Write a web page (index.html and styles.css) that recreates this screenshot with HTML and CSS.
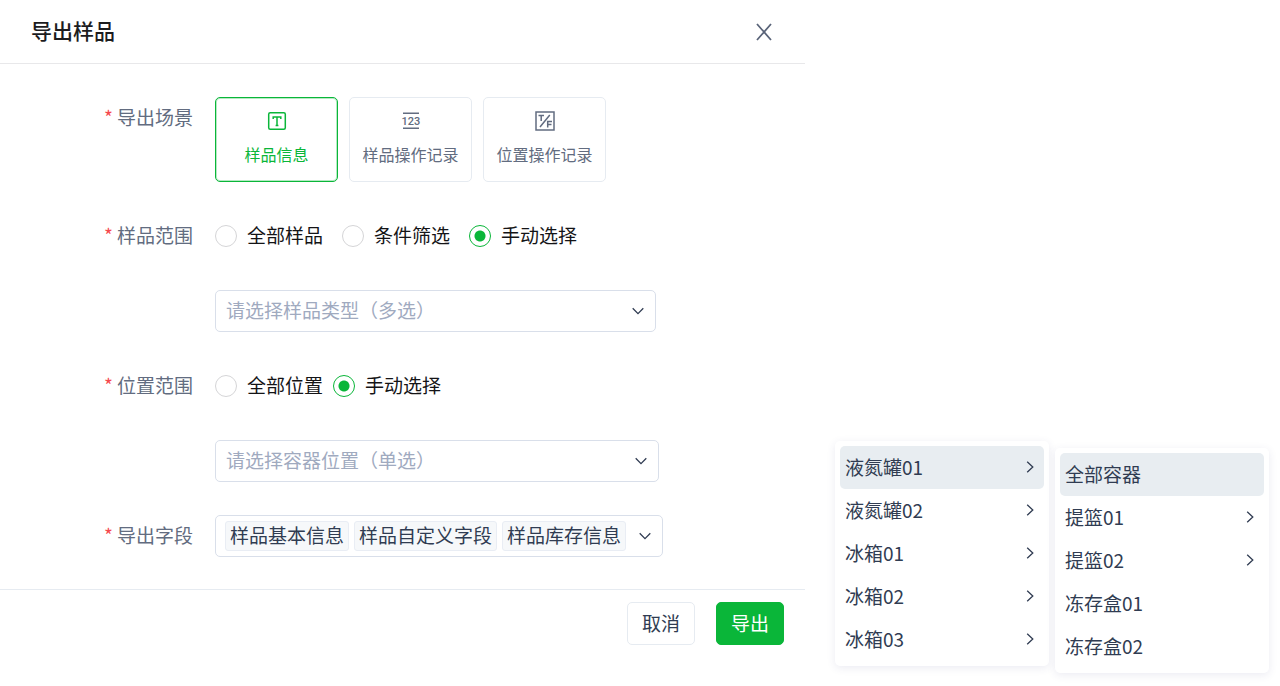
FILE: index.html
```html
<!DOCTYPE html>
<html lang="zh-CN">
<head>
<meta charset="utf-8">
<meta name="viewport" content="width=device-width, initial-scale=1">
<title>导出样品</title>
<link rel="stylesheet" href="styles.css">
</head>
<body>
<svg class="sprite" aria-hidden="true">
  <symbol id="chevron-down" viewBox="0 0 12 12"><path d="M.7 3.3 6 8.6l5.3-5.3"/></symbol>
  <symbol id="chevron-right" viewBox="0 0 12 12"><path d="M3.2.7 8.8 6l-5.6 5.3"/></symbol>
</svg>
<main class="page">
  <form class="dialog">
    <header class="dialog-header">
      <h1 class="dialog-title">导出样品</h1>
      <button class="close" type="button" aria-label="关闭">
        <svg viewBox="0 0 16 16" width="16" height="16"><path d="M1 0 15 16M15 0 1 16"/></svg>
      </button>
    </header>

    <div class="dialog-body">
      <div class="row row-top">
        <span class="label" id="scene-label">导出场景</span>
        <div class="cards" role="group" aria-labelledby="scene-label">
          <button class="card card-active" type="button" aria-pressed="true">
            <svg class="card-icon" viewBox="0 0 20 20"><rect x="1.7" y="1.7" width="16.6" height="16.6" rx="1.5"/><path d="M6.2 8V6h7.6v2M10 6v8.4M8.6 14.4h2.8"/></svg>
            <span>样品信息</span>
          </button>
          <button class="card" type="button" aria-pressed="false">
            <svg class="card-icon" viewBox="0 0 20 20"><path d="M2 2.3h16M2 17.3h16"/><text class="icon-digits" x="10" y="14" text-anchor="middle">123</text></svg>
            <span>样品操作记录</span>
          </button>
          <button class="card" type="button" aria-pressed="false">
            <svg class="card-icon" viewBox="0 0 20 20"><rect x="1" y="1" width="18" height="18"/><path d="M3.5 4.5h5.5M6.2 4.5v5.5M14.8 4 5 16M12.7 16.5v-6h4.3M12.7 13.5h3.8"/></svg>
            <span>位置操作记录</span>
          </button>
        </div>
      </div>

      <div class="row">
        <span class="label" id="sample-label">样品范围</span>
        <div class="radios" role="radiogroup" aria-labelledby="sample-label">
          <label class="radio"><input type="radio" name="sample"><span class="radio-text">全部样品</span></label>
          <label class="radio"><input type="radio" name="sample"><span class="radio-text">条件筛选</span></label>
          <label class="radio"><input type="radio" name="sample" checked><span class="radio-text">手动选择</span></label>
        </div>
      </div>

      <div class="row">
        <div class="select select-type">
          <select aria-label="样品类型"><option>请选择样品类型（多选）</option></select>
          <svg class="chevron"><use href="#chevron-down"/></svg>
        </div>
      </div>

      <div class="row">
        <span class="label" id="place-label">位置范围</span>
        <div class="radios radios-tight" role="radiogroup" aria-labelledby="place-label">
          <label class="radio"><input type="radio" name="place"><span class="radio-text">全部位置</span></label>
          <label class="radio"><input type="radio" name="place" checked><span class="radio-text">手动选择</span></label>
        </div>
      </div>

      <div class="row">
        <div class="select select-place">
          <select aria-label="容器位置"><option>请选择容器位置（单选）</option></select>
          <svg class="chevron"><use href="#chevron-down"/></svg>
        </div>
      </div>

      <div class="row row-close">
        <span class="label" id="field-label">导出字段</span>
        <button class="tags" type="button" aria-haspopup="listbox" aria-labelledby="field-label">
          <span class="tag">样品基本信息</span>
          <span class="tag">样品自定义字段</span>
          <span class="tag">样品库存信息</span>
          <svg class="chevron"><use href="#chevron-down"/></svg>
        </button>
      </div>
    </div>

    <footer class="dialog-footer">
      <button class="button" type="button">取消</button>
      <button class="button button-primary" type="submit">导出</button>
    </footer>
  </form>

  <aside class="cascader" aria-label="容器位置">
    <div class="menu" role="menu">
      <button class="item item-active" type="button" role="menuitem">液氮罐01<svg class="chevron"><use href="#chevron-right"/></svg></button>
      <button class="item" type="button" role="menuitem">液氮罐02<svg class="chevron"><use href="#chevron-right"/></svg></button>
      <button class="item" type="button" role="menuitem">冰箱01<svg class="chevron"><use href="#chevron-right"/></svg></button>
      <button class="item" type="button" role="menuitem">冰箱02<svg class="chevron"><use href="#chevron-right"/></svg></button>
      <button class="item" type="button" role="menuitem">冰箱03<svg class="chevron"><use href="#chevron-right"/></svg></button>
    </div>
    <div class="menu menu-sub" role="menu">
      <button class="item item-active" type="button" role="menuitem">全部容器</button>
      <button class="item" type="button" role="menuitem">提篮01<svg class="chevron"><use href="#chevron-right"/></svg></button>
      <button class="item" type="button" role="menuitem">提篮02<svg class="chevron"><use href="#chevron-right"/></svg></button>
      <button class="item" type="button" role="menuitem">冻存盒01</button>
      <button class="item" type="button" role="menuitem">冻存盒02</button>
    </div>
  </aside>
</main>
</body>
</html>
```

FILE: styles.css
```css
:root {
  --green: #0ab639;
  --ink: #303c52;
  --muted: #626c80;
  --placeholder: #a0aabf;
  --line: #e6ebf1;
  --field-line: #d9dfea;
  --hover: #e8edf1;
}

* {
  box-sizing: border-box;
}

body {
  margin: 0;
  background: #fff;
  color: var(--ink);
  font-family: "Noto Sans CJK SC", "Noto Sans", sans-serif;
  font-size: 19px;
  line-height: 26px;
}

button,
select {
  margin: 0;
  font: inherit;
  color: inherit;
  background: none;
  border: 0;
  cursor: pointer;
}

svg {
  fill: none;
  stroke: currentColor;
}

.sprite {
  display: none;
}

.page {
  display: grid;
  grid-template-columns: minmax(0, 1fr) auto;
}

/* Dialog */

.dialog-header {
  display: flex;
  align-items: center;
  justify-content: space-between;
  height: 64px;
  padding: 0 33px 0 31px;
  border-bottom: 1px solid #e8e8ea;
}

.dialog-title {
  margin: 0;
  padding-bottom: 4px;
  color: #1c1c1e;
  font-size: 21px;
  font-weight: 500;
}

.close {
  display: flex;
  padding: 0;
  color: #596378;
}

.close svg {
  overflow: visible;
  stroke-width: 1.8;
}

.dialog-body {
  display: flex;
  flex-direction: column;
  gap: 41px;
  padding: 33px 0 32px;
}

.row {
  display: grid;
  grid-template-columns: 193px 1fr;
  column-gap: 22px;
  align-items: center;
  justify-items: start;
}

.row > :not(.label) {
  grid-column: 2;
}

.row-top {
  align-items: start;
}

.row-top .label {
  padding-top: 8px;
}

.row-close {
  margin-top: -8px;
}

.label {
  justify-self: end;
  padding-bottom: 2px;
  color: var(--muted);
  line-height: 24px;
}

.label::before {
  content: "*";
  margin-right: 4px;
  color: #f5494d;
}

.cards {
  display: flex;
  gap: 11px;
}

.card {
  display: flex;
  flex-direction: column;
  align-items: center;
  gap: 11px;
  width: 123px;
  height: 85px;
  padding: 13px 0 0;
  border: 1px solid var(--line);
  border-radius: 5px;
  color: var(--muted);
  font-size: 16px;
  line-height: 24px;
}

.card-active {
  border-color: var(--green);
  box-shadow: inset 0 0 0 1px rgba(10, 182, 57, 0.3);
  color: var(--green);
}

.card-icon {
  width: 20px;
  height: 20px;
  stroke-width: 1.5;
}

.icon-digits {
  fill: currentColor;
  stroke: none;
  font-family: Roboto, sans-serif;
  font-size: 11px;
  font-weight: 500;
}

.radios {
  display: flex;
  gap: 19px;
  color: #141416;
}

.radios-tight {
  gap: 10px;
}

.radio {
  display: flex;
  align-items: center;
  gap: 10px;
  cursor: pointer;
}

.radio-text {
  padding-bottom: 2px;
  line-height: 24px;
}

.radio input {
  appearance: none;
  width: 22px;
  height: 22px;
  margin: 0;
  border: 1px solid #d5d5d7;
  border-radius: 50%;
}

.radio input:checked {
  border-color: var(--green);
  background: radial-gradient(circle, var(--green) 5px, transparent 6px);
}

.select {
  display: grid;
  align-items: center;
}

.select > * {
  grid-area: 1 / 1;
}

.select-type {
  width: 441px;
}

.select-place {
  width: 444px;
}

.select select {
  appearance: none;
  width: 100%;
  height: 42px;
  padding: 0 40px 2px 10px;
  border: 1px solid var(--field-line);
  border-radius: 5px;
  color: var(--placeholder);
}

.select .chevron {
  justify-self: end;
  margin-right: 12px;
  pointer-events: none;
}

.chevron {
  flex: none;
  width: 12px;
  height: 12px;
  stroke-width: 1.3;
}

.tags {
  display: flex;
  align-items: center;
  gap: 5px;
  height: 42px;
  padding: 0 11px 0 9px;
  border: 1px solid var(--field-line);
  border-radius: 5px;
}

.tag {
  padding: 0 4px 2px;
  border: 1px solid #e9edf4;
  border-radius: 3px;
  background: #f6f8fa;
}

.tags .chevron {
  margin-left: 8px;
}

.dialog-footer {
  display: flex;
  justify-content: flex-end;
  gap: 21px;
  padding: 12px 21px;
  border-top: 1px solid var(--line);
}

.button {
  height: 43px;
  padding: 0 14px 2px;
  border: 1px solid var(--line);
  border-radius: 5px;
}

.button-primary {
  border-color: var(--green);
  background: var(--green);
  color: #fff;
}

/* Cascading menus */

.cascader {
  display: flex;
  align-items: flex-start;
  gap: 6px;
  padding: 441px 11px 12px 30px;
}

.menu {
  display: flex;
  flex-direction: column;
  width: 214px;
  padding: 5px;
  border-radius: 5px;
  background: #fff;
  box-shadow: 0 2px 8px rgba(60, 60, 130, 0.1);
}

.menu-sub {
  margin-top: 7px;
}

.item {
  display: flex;
  align-items: center;
  justify-content: space-between;
  height: 43px;
  padding: 0 8px 2px 5px;
  border-radius: 5px;
  text-align: left;
}

.item-active {
  background: var(--hover);
}
```
